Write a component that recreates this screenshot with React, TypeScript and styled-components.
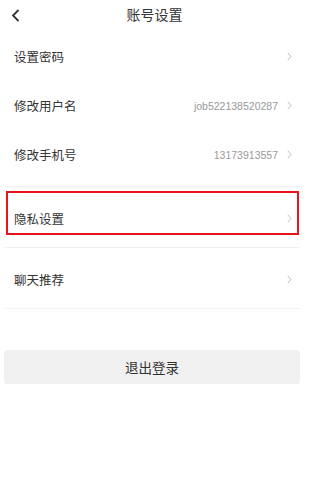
import styled, { createGlobalStyle } from "styled-components";

const GlobalStyle = createGlobalStyle`
  body {
    margin: 0;
    background: #fff;
    font-family: "Liberation Sans", "Noto Sans CJK SC", sans-serif;
    color: #333;
  }
`;

const Page = styled.div`
  width: 309px;
  min-height: 501px;
  background: #fff;
`;

const Header = styled.div`
  position: relative;
  height: 28px;
  display: flex;
  align-items: center;
  justify-content: center;
`;

const BackButton = styled.button`
  position: absolute;
  left: 8px;
  top: 7px;
  width: 16px;
  height: 16px;
  padding: 0;
  border: 0;
  background: none;
  display: flex;
  align-items: center;
  justify-content: center;
  cursor: pointer;
`;

const Title = styled.h1`
  margin: 0;
  font-size: 14px;
  font-weight: 400;
  color: #333;
`;

const List = styled.div`
  margin: 4px 9px 0 5px;
`;

const Row = styled.div<{ $tall?: boolean; $line?: boolean }>`
  position: relative;
  height: ${(p) => (p.$tall ? "61px" : "49px")};
  display: flex;
  align-items: center;
  padding: ${(p) => (p.$tall ? "2px 8px 0 9px" : "0 8px 0 9px")};
  box-sizing: border-box;
  border-bottom: ${(p) => (p.$line ? "1px solid #f0f0f0" : "none")};
`;

const Divider = styled.div`
  margin-top: 7px;
  border-top: 1px solid #f0f0f0;
`;

const Label = styled.span`
  flex: 1;
  font-size: 12.5px;
  color: #333;
`;

const Value = styled.span`
  font-size: 10.5px;
  color: #999;
  margin-right: 9px;
`;

const Highlight = styled.div`
  position: absolute;
  left: 1px;
  right: 1px;
  top: 4px;
  height: 44px;
  border: 2px solid #e8141c;
  box-sizing: border-box;
  pointer-events: none;
`;

const LogoutButton = styled.button`
  display: block;
  width: 296px;
  height: 34px;
  margin: 41px 0 0 4px;
  border: 0;
  border-radius: 3px;
  background: #f0f0f0;
  font-family: "Liberation Sans", "Noto Sans CJK SC", sans-serif;
  font-size: 13.5px;
  color: #333;
  cursor: pointer;
`;

function Chevron() {
  return (
    <svg width="5" height="9" viewBox="0 0 5 9">
      <path d="M0.8 0.8 L4 4.5 L0.8 8.2" fill="none" stroke="#bdbdbd" strokeWidth="1" />
    </svg>
  );
}

const items = [
  { label: "设置密码" },
  { label: "修改用户名", value: "job522138520287" },
  { label: "修改手机号", value: "13173913557" },
];

export default function App() {
  return (
    <Page>
      <GlobalStyle />
      <Header>
        <BackButton>
          <svg width="10" height="13" viewBox="0 0 10 13">
            <path d="M7.5 1 L2 6.5 L7.5 12" fill="none" stroke="#333" strokeWidth="1.8" />
          </svg>
        </BackButton>
        <Title>账号设置</Title>
      </Header>
      <List>
        {items.map((it) => (
          <Row key={it.label}>
            <Label>{it.label}</Label>
            {it.value ? <Value>{it.value}</Value> : null}
            <Chevron />
          </Row>
        ))}
        <Divider />
        <Row $tall $line>
          <Highlight />
          <Label>隐私设置</Label>
          <Chevron />
        </Row>
        <Row $tall $line>
          <Label>聊天推荐</Label>
          <Chevron />
        </Row>
      </List>
      <LogoutButton>退出登录</LogoutButton>
    </Page>
  );
}
